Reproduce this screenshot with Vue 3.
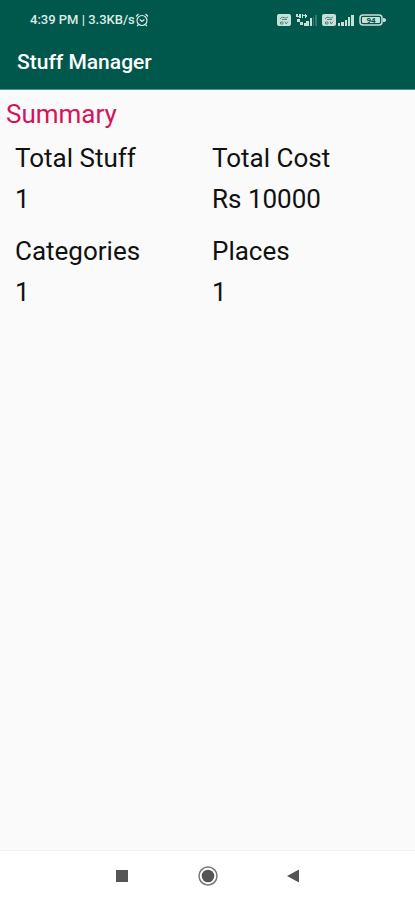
<template>
  <div class="screen">
    <!-- HEADER -->
    <header class="header">
      <div class="status">
        <div class="status-left">
          <span>4:39 PM | 3.3KB/s</span>
          <svg class="alarm" viewBox="0 0 14 14" width="14" height="14" aria-hidden="true">
            <circle cx="7" cy="7.5" r="5" />
            <path d="M1 3.5 3.5 1M13 3.5 10.5 1M4.8 6.5 7 8.5 9.4 6.5M3.5 11.5 2.2 13M10.5 11.5 11.8 13" />
          </svg>
        </div>

        <div class="status-right">
          <svg viewBox="0 0 14 12" width="14" height="12" aria-hidden="true">
            <rect class="fill" width="14" height="12" rx="2" />
            <path class="cut" d="M3 5q2-3 4-1.500t4-.5M5 5.500h5M3.500 8h2.500v2H3.500zM8 7.500l1.200 2.500L11 7.500" />
          </svg>
          <svg viewBox="0 0 21 12" width="21" height="12" aria-hidden="true">
            <path class="fill" d="M0 0h2v2h1V0h2v4H3V3H0zM6 0h1v1h2V0h1v4H9V2H7v2H6zM10 1h1v2h-1zM1 5h3v3H1zM4 8h3v3H4zM8 9h2v3H8zM10 7h3v5h-3zM14 4h2v8h-2z" />
            <path class="fill dim" d="M17 3h1v9h-1zM19 1h2v11h-2z" />
          </svg>
          <svg viewBox="0 0 14 12" width="14" height="12" aria-hidden="true">
            <rect class="fill" width="14" height="12" rx="2" />
            <path class="cut" d="M3 5q2-3 4-1.500t4-.5M5 5.500h5M3.500 8h2.500v2H3.500zM8 7.500l1.200 2.500L11 7.500" />
          </svg>
          <svg class="signal" viewBox="0 0 16 12" width="16" height="12" aria-hidden="true">
            <path class="fill" d="M0 9h2v3H0zM3 8h3v4H3zM7 6h2v6H7zM10 3h2v9h-2zM13 1h3v11h-3z" />
          </svg>
          <svg class="battery" viewBox="0 0 27 12" width="27" height="12" aria-hidden="true">
            <rect class="shell" x="1" y="1" width="22" height="10" rx="3" />
            <rect class="fill" x="3" y="3" width="18" height="6" rx="1" />
            <path class="fill" d="M24 4q3 0 3 2t-3 2z" />
            <text x="12" y="9" text-anchor="middle">94</text>
          </svg>
        </div>
      </div>

      <h1 class="title">Stuff Manager</h1>
    </header>

    <!-- SUMMARY -->
    <main class="content">
      <h2 class="heading">Summary</h2>
      <dl class="grid">
        <div v-for="item in summary" :key="item.label" class="item">
          <dt>{{ item.label }}</dt>
          <dd>{{ item.value }}</dd>
        </div>
      </dl>
    </main>

    <!-- NAVIGATION -->
    <nav class="nav">
      <button type="button" aria-label="Recent apps">
        <svg viewBox="0 0 20 20" width="20" height="20">
          <rect x="4" y="4" width="12" height="12" />
        </svg>
      </button>
      <button type="button" aria-label="Home">
        <svg viewBox="0 0 20 20" width="20" height="20">
          <circle class="ring" cx="10" cy="10" r="9" />
          <circle cx="10" cy="10" r="6.3" />
        </svg>
      </button>
      <button type="button" aria-label="Back">
        <svg viewBox="0 0 20 20" width="20" height="20">
          <path d="M3 10 15 3.5v13z" />
        </svg>
      </button>
    </nav>
  </div>
</template>

<script setup>
const summary = [
  { label: 'Total Stuff', value: '1' },
  { label: 'Total Cost', value: 'Rs 10000' },
  { label: 'Categories', value: '1' },
  { label: 'Places', value: '1' }
]
</script>

<style>
body {
  margin: 0;
  background: #fafafa;
}
</style>

<style scoped>
.screen {
  min-height: 100vh;
  display: flex;
  flex-direction: column;
  background: #fafafa;
  color: #111;
  font-family: Roboto, 'Liberation Sans', sans-serif;
}

/* ================== HEADER ================== */
.header {
  background: #00574b;
  color: #fff;
  border-bottom: 1px solid #5d8f87;
}

.status {
  display: flex;
  align-items: center;
  justify-content: space-between;
  height: 39px;
  padding: 0 29px 0 30px;
  color: #dcebe7;
  font-size: 13px;
  font-weight: 500;
}

.status-left,
.status-right {
  display: flex;
  align-items: center;
}

.status-right {
  gap: 5px;
}

.alarm {
  fill: none;
  stroke: #dcebe7;
  stroke-width: 1.2;
}

.fill {
  fill: #c7e0da;
}

.dim {
  opacity: 0.25;
}

.cut {
  fill: none;
  stroke: #4d8c80;
}

.signal {
  margin-left: -3px;
}

.shell {
  fill: none;
  stroke: #c7e0da;
  stroke-width: 1.5;
}

.battery text {
  fill: #00574b;
  font-size: 8px;
  font-weight: 700;
}

.title {
  margin: 0;
  padding: 8px 17px 12px;
  font-size: 21px;
  line-height: 30px;
  font-weight: 500;
}

/* ================== CONTENT ================== */
.content {
  flex: 1;
  padding: 8px 6px;
}

.heading {
  margin: 0;
  color: #d5145a;
  font-size: 26px;
  line-height: 32px;
  font-weight: 400;
}

.grid {
  display: grid;
  grid-template-columns: 1fr 1fr;
  row-gap: 11px;
  margin: 8px 0 0 9px;
}

.item {
  font-size: 26px;
  line-height: 41px;
}

.item dd {
  margin: 0;
}

/* ================== NAVIGATION ================== */
.nav {
  display: flex;
  justify-content: center;
  height: 49px;
  background: #fff;
  border-top: 1px solid #f0f0f0;
}

.nav button {
  display: flex;
  align-items: center;
  justify-content: center;
  width: 86px;
  padding: 0;
  border: 0;
  background: transparent;
  cursor: pointer;
}

.nav svg {
  fill: #555;
}

.nav .ring {
  fill: none;
  stroke: #777;
  stroke-width: 1.5;
}
</style>
